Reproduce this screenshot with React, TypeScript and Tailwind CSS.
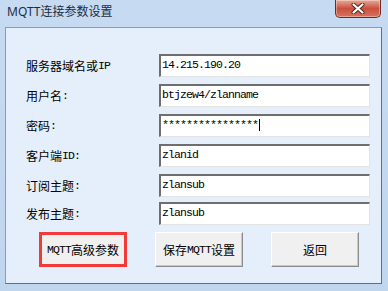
import React from 'react';

function T({ s }: { s: string }) {
  const parts = s.split(/([\x20-\x7e]+)/).filter((p) => p.length > 0);
  return (
    <span className="inline-flex items-center">
      {parts.map((p, i) =>
        /^[\x20-\x7e]+$/.test(p) ? (
          <span key={i} className="font-['Liberation_Mono',monospace] text-[11.5px] tracking-[-0.9px] whitespace-pre">
            {p}
          </span>
        ) : (
          <span key={i} className="font-['Noto_Sans_CJK_SC',sans-serif] text-[12px]">
            {p}
          </span>
        )
      )}
    </span>
  );
}

const rows = [
  { label: '服务器域名或IP', value: '14.215.190.20', mt: 'mt-[26px]' },
  { label: '用户名:', value: 'btjzew4/zlanname', mt: 'mt-[7px]' },
  { label: '密码:', value: '****************', mt: 'mt-[7px]', caret: true },
  { label: '客户端ID:', value: 'zlanid', mt: 'mt-[7px]' },
  { label: '订阅主题:', value: 'zlansub', mt: 'mt-[7px]' },
  { label: '发布主题:', value: 'zlansub', mt: 'mt-[5px]' },
];

function Field({ value, caret }: { value: string; caret?: boolean }) {
  return (
    <div className="w-[211px] h-[23px] bg-white border-t-2 border-l-2 border-t-[#6e6e6e] border-l-[#6e6e6e] border-b border-r border-b-[#e3e3e3] border-r-[#e3e3e3] flex items-center pl-[1px] pb-[3px] text-black leading-none">
      <T s={value} />
      {caret && <span className="w-px h-[12px] bg-black ml-[1px]" />}
    </div>
  );
}

function Btn({ text, red }: { text: string; red?: boolean }) {
  return (
    <div
      className={
        'w-[88px] h-[35px] bg-[#f0f0f0] flex items-center justify-center text-black leading-none ' +
        (red
          ? 'border-[3px] border-[#f23a3a]'
          : 'border border-t-white border-l-white border-b-[#8c8c8c] border-r-[#8c8c8c] shadow-[inset_-1px_-1px_0_#c8c8c8]')
      }
    >
      <T s={text} />
    </div>
  );
}

export default function App() {
  return (
    <div className="w-[388px] h-[291px] bg-gradient-to-b from-[#c6dbf1] to-[#c0d6ee] relative overflow-hidden">
      {/* title bar */}
      <div className="h-[27px] flex items-start">
        <div className="pl-[7px] pt-[4px] text-[12px] text-[#1b2d45] font-['Noto_Sans','Noto_Sans_CJK_SC',sans-serif] leading-[16px]">
          MQTT连接参数设置
        </div>
      </div>
      <div className="absolute top-0 left-[335px] w-[46px] h-[18px] rounded-b-[5px] border border-t-0 border-[#6a2c22] bg-gradient-to-b from-[#e9a898] via-[#c9503d] to-[#d9725e] flex items-center justify-center shadow-[inset_0_0_0_1px_rgba(255,255,255,0.35)]">
        <svg width="14" height="11" viewBox="0 0 14 11">
          <path d="M2.5 1.5 L11.5 9.5 M11.5 1.5 L2.5 9.5" stroke="#4a2620" strokeWidth="4" strokeLinecap="round" />
          <path d="M2.5 1.5 L11.5 9.5 M11.5 1.5 L2.5 9.5" stroke="#ffffff" strokeWidth="2.2" strokeLinecap="round" />
        </svg>
      </div>

      {/* client area */}
      <div className="ml-[5px] w-[377px] h-[257px] border border-t-[#8d9cad] border-l-[#8d9cad] border-b-[#646e7a] border-r-[#646e7a] bg-[#e4effb] flex flex-col">
        {rows.map((r) => (
          <div key={r.label} className={'flex items-center h-[23px] ' + r.mt}>
            <div className="w-[153px] pl-[20px] pb-[2px] text-black leading-none">
              <T s={r.label} />
            </div>
            <Field value={r.value} caret={r.caret} />
          </div>
        ))}
        <div className="flex mt-[7px] pl-[33px] gap-[28px]">
          <Btn text="MQTT高级参数" red />
          <Btn text="保存MQTT设置" />
          <Btn text="返回" />
        </div>
      </div>
    </div>
  );
}
